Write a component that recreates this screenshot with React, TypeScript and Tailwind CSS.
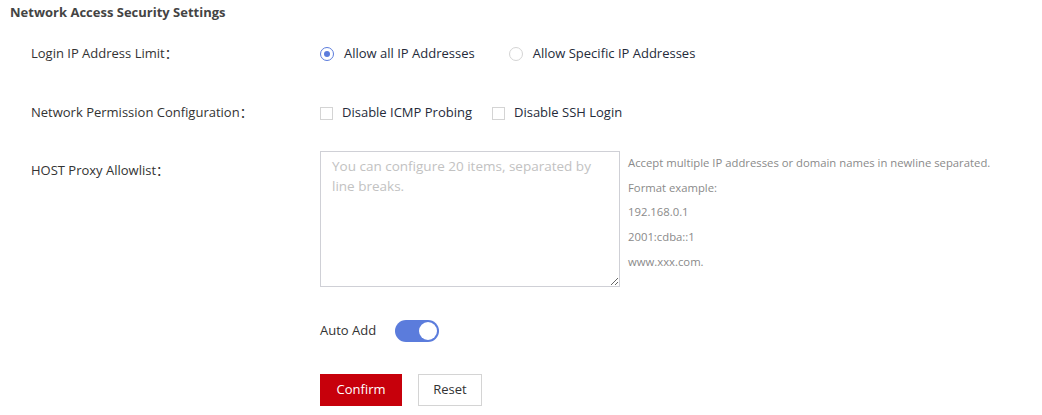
import { useState } from "react";

const font = "font-['Open_Sans','Noto_Sans_CJK_SC',sans-serif]";

function Radio({ checked, label, onClick }: { checked: boolean; label: string; onClick: () => void }) {
  return (
    <label className="flex items-center cursor-pointer" onClick={onClick}>
      <span
        className={`flex h-[14px] w-[14px] items-center justify-center rounded-full border bg-white ${
          checked ? "border-[#5b7cdc]" : "border-[#d4d4d4]"
        }`}
      >
        {checked && <span className="h-[6px] w-[6px] rounded-full bg-[#5b7cdc]" />}
      </span>
      <span className="ml-[10px] text-[13px] text-[#252b3a]">{label}</span>
    </label>
  );
}

function Checkbox({ label }: { label: string }) {
  const [on, setOn] = useState(false);
  return (
    <label className="flex items-center cursor-pointer" onClick={() => setOn(!on)}>
      <span
        className={`h-[13px] w-[13px] border ${on ? "border-[#5b7cdc] bg-[#5b7cdc]" : "border-[#d4d4d4] bg-white"}`}
      />
      <span className="ml-[9px] text-[13px] text-[#252b3a]">{label}</span>
    </label>
  );
}

export default function App() {
  const [ipMode, setIpMode] = useState("all");
  const [autoAdd, setAutoAdd] = useState(true);

  return (
    <div className={`h-[415px] w-[1042px] overflow-hidden bg-white ${font}`}>
      <div className="h-[22px] pl-[10px] pt-[2px] text-[13px] font-bold leading-[20px] text-[#444]">
        Network Access Security Settings
      </div>

      <div className="mt-[16px] flex h-[32px] items-center">
        <div className="w-[320px] pl-[31px] text-[13px] text-[#333]">Login IP Address Limit：</div>
        <div className="flex items-center gap-[34px]">
          <Radio checked={ipMode === "all"} label="Allow all IP Addresses" onClick={() => setIpMode("all")} />
          <Radio
            checked={ipMode === "specific"}
            label="Allow Specific IP Addresses"
            onClick={() => setIpMode("specific")}
          />
        </div>
      </div>

      <div className="mt-[27px] flex h-[32px] items-center">
        <div className="w-[320px] pl-[31px] text-[13px] text-[#333]">Network Permission Configuration：</div>
        <div className="flex items-center gap-[20px]">
          <Checkbox label="Disable ICMP Probing" />
          <Checkbox label="Disable SSH Login" />
        </div>
      </div>

      <div className="mt-[22px] flex items-start">
        <div className="mt-[9px] w-[320px] pl-[31px] text-[13px] leading-[20px] text-[#333]">
          HOST Proxy Allowlist：
        </div>
        <textarea
          className="h-[136px] w-[300px] resize border border-[#cfd0d6] pb-[6px] pl-[11px] pr-[16px] pt-[4px] text-[13.5px] leading-[20px] text-[#252b3a] outline-none placeholder:text-[#c2c2c2]"
          placeholder="You can configure 20 items, separated by line breaks."
        />
        <div className="ml-[8px] text-[11.3px] leading-[24.7px] text-[#8a8a8a]">
          <div>Accept multiple IP addresses or domain names in newline separated.</div>
          <div>Format example:</div>
          <div>192.168.0.1</div>
          <div>2001:cdba::1</div>
          <div>www.xxx.com.</div>
        </div>
      </div>

      <div className="mt-[33px] flex h-[22px] items-center pl-[320px]">
        <span className="text-[13px] text-[#333]">Auto Add</span>
        <button
          onClick={() => setAutoAdd(!autoAdd)}
          className={`ml-[19px] flex h-[22px] w-[44px] items-center rounded-full p-[2px] ${
            autoAdd ? "justify-end bg-[#5b7cdc]" : "justify-start bg-[#c2c2c2]"
          }`}
        >
          <span className="h-[18px] w-[18px] rounded-full bg-white" />
        </button>
      </div>

      <div className="mt-[32px] flex items-center gap-[16px] pl-[320px]">
        <button className="h-[32px] w-[82px] bg-[#c7000b] text-[13px] text-white">Confirm</button>
        <button className="h-[32px] w-[64px] border border-[#d4d4d4] bg-white text-[13px] text-[#333]">
          Reset
        </button>
      </div>
    </div>
  );
}
